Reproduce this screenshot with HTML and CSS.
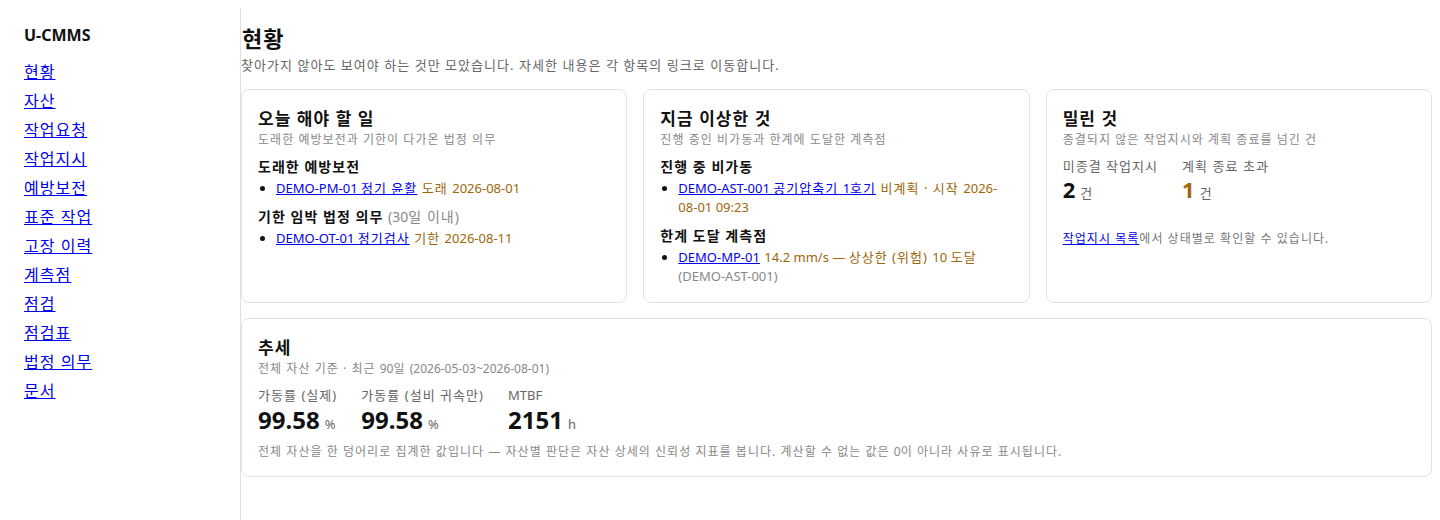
FILE: index.html
```html
<!DOCTYPE html>
<html lang="ko">
<head>
<meta charset="utf-8">
<title>U-CMMS 현황</title>
<link rel="stylesheet" href="styles.css">
</head>
<body>
<div class="layout">
  <nav class="sidebar">
    <div class="brand lat">U-CMMS</div>
    <ul class="nav">
      <li><a href="#">현황</a></li>
      <li><a href="#">자산</a></li>
      <li><a href="#">작업요청</a></li>
      <li><a href="#">작업지시</a></li>
      <li><a href="#">예방보전</a></li>
      <li><a href="#">표준 작업</a></li>
      <li><a href="#">고장 이력</a></li>
      <li><a href="#">계측점</a></li>
      <li><a href="#">점검</a></li>
      <li><a href="#">점검표</a></li>
      <li><a href="#">법정 의무</a></li>
      <li><a href="#">문서</a></li>
    </ul>
  </nav>
  <main class="main">
    <h1 class="page-title">현황</h1>
    <p class="page-sub">찾아가지 않아도 보여야 하는 것만 모았습니다. 자세한 내용은 각 항목의 링크로 이동합니다.</p>

    <div class="cards">
      <section class="card">
        <h2 class="card-title">오늘 해야 할 일</h2>
        <p class="card-sub">도래한 예방보전과 기한이 다가온 법정 의무</p>
        <h3 class="sec">도래한 예방보전</h3>
        <ul class="items">
          <li><a href="#"><span class="lat">DEMO-PM-01 </span>정기 윤활</a> <span class="warn">도래 <span class="lat">2026-08-01</span></span></li>
        </ul>
        <h3 class="sec">기한 임박 법정 의무 <span class="muted"><span class="lat">(30</span>일 이내)</span></h3>
        <ul class="items">
          <li><a href="#"><span class="lat">DEMO-OT-01 </span>정기검사</a> <span class="warn">기한 <span class="lat">2026-08-11</span></span></li>
        </ul>
      </section>

      <section class="card">
        <h2 class="card-title">지금 이상한 것</h2>
        <p class="card-sub">진행 중인 비가동과 한계에 도달한 계측점</p>
        <h3 class="sec">진행 중 비가동</h3>
        <ul class="items">
          <li><a href="#"><span class="lat">DEMO-AST-001 </span>공기압축기 <span class="lat">1</span>호기</a> <span class="warn">비계획 · 시작 <span class="lat">2026-08-01 09:23</span></span></li>
        </ul>
        <h3 class="sec">한계 도달 계측점</h3>
        <ul class="items">
          <li><a href="#" class="lat">DEMO-MP-01</a> <span class="warn"><span class="lat">14.2 mm/s — </span>상상한 (위험) <span class="lat">10 </span>도달</span> <span class="muted lat">(DEMO-AST-001)</span></li>
        </ul>
      </section>

      <section class="card">
        <h2 class="card-title">밀린 것</h2>
        <p class="card-sub">종결되지 않은 작업지시와 계획 종료를 넘긴 건</p>
        <div class="stats small">
          <div class="stat">
            <div class="stat-label">미종결 작업지시</div>
            <div class="stat-value">2<span class="unit">건</span></div>
          </div>
          <div class="stat">
            <div class="stat-label">계획 종료 초과</div>
            <div class="stat-value warn">1<span class="unit">건</span></div>
          </div>
        </div>
        <p class="note"><a href="#">작업지시 목록</a>에서 상태별로 확인할 수 있습니다.</p>
      </section>
    </div>

    <section class="card trend">
      <h2 class="card-title">추세</h2>
      <p class="card-sub">전체 자산 기준 · 최근 <span class="lat">90</span>일 <span class="lat">(2026-05-03~2026-08-01)</span></p>
      <div class="stats big">
        <div class="stat">
          <div class="stat-label">가동률 (실제)</div>
          <div class="stat-value">99.58<span class="unit">%</span></div>
        </div>
        <div class="stat">
          <div class="stat-label">가동률 (설비 귀속만)</div>
          <div class="stat-value">99.58<span class="unit">%</span></div>
        </div>
        <div class="stat">
          <div class="stat-label lat">MTBF</div>
          <div class="stat-value">2151<span class="unit">h</span></div>
        </div>
      </div>
      <p class="foot">전체 자산을 한 덩어리로 집계한 값입니다 — 자산별 판단은 자산 상세의 신뢰성 지표를 봅니다. 계산할 수 없는 값은 <span class="lat">0</span>이 아니라 사유로 표시됩니다.</p>
    </section>
  </main>
</div>
</body>
</html>
```

FILE: styles.css
```css
html, body {
  margin: 0;
  padding: 0;
}
body {
  margin: 8px;
  font-family: "Noto Sans", "Noto Sans CJK KR", sans-serif;
  letter-spacing: 0.065em;
  color: #111;
  background: #fff;
}
.lat {
  letter-spacing: 0;
}
.layout {
  display: flex;
  align-items: stretch;
  min-height: 512px;
}
.sidebar {
  width: 233px;
  box-sizing: border-box;
  padding: 16px 16px;
  border-right: 1px solid #e0e0e0;
  flex: none;
}
.brand {
  font-size: 16px;
  font-weight: 700;
  line-height: 22px;
  margin-bottom: 15px;
}
.nav {
  list-style: none;
  margin: 0;
  padding: 0;
  display: flex;
  flex-direction: column;
  gap: 7px;
}
.nav a {
  font-size: 16px;
  line-height: 22px;
  color: #0000ee;
}
.main {
  flex: 1;
  padding: 16px 0 0 0;
  min-width: 0;
}
.page-title {
  margin: 0 0 0 1px;
  font-size: 22px;
  line-height: 28px;
  font-weight: 700;
}
.page-sub {
  margin: 4px 0 15px 0;
  font-size: 13px;
  line-height: 18px;
  color: #666;
}
.cards {
  display: grid;
  grid-template-columns: repeat(3, 1fr);
  gap: 16px;
  margin-bottom: 15px;
}
.card {
  border: 1px solid #e3e3e3;
  border-radius: 8px;
  padding: 16px;
  background: #fff;
}
.card-title {
  margin: 0;
  font-size: 17px;
  line-height: 26px;
  font-weight: 700;
}
.card-sub {
  margin: 0;
  font-size: 12px;
  line-height: 16px;
  color: #888;
}
.sec {
  margin: 9px 0 2px 0;
  font-size: 14px;
  line-height: 20px;
  font-weight: 700;
}
.sec .muted {
  font-weight: 400;
  font-size: 14px;
}
.items {
  margin: 0;
  padding-left: 18px;
  font-size: 13px;
  line-height: 19px;
}
.items li {
  margin: 0;
}
.items a {
  color: #0000ee;
}
.warn {
  color: #a0660a;
}
.muted {
  color: #888;
}
.stats {
  display: flex;
  gap: 24px;
}
.stats.small {
  margin-top: 9px;
}
.stat-label {
  font-size: 13px;
  line-height: 18px;
  color: #666;
}
.stat-value {
  font-size: 22px;
  font-weight: 700;
  line-height: 29px;
  letter-spacing: 0;
}
.unit {
  font-size: 13px;
  font-weight: 400;
  color: #666;
  margin-left: 5px;
}
.note {
  margin: 23px 0 0 0;
  font-size: 12px;
  line-height: 16px;
  color: #777;
}
.note a {
  color: #0000ee;
}
.trend .stats {
  margin-top: 9px;
}
.trend .stat-value {
  font-size: 24px;
  line-height: 32px;
}
.foot {
  margin: 3px 0 0 0;
  font-size: 12px;
  line-height: 17px;
  color: #888;
}
```
